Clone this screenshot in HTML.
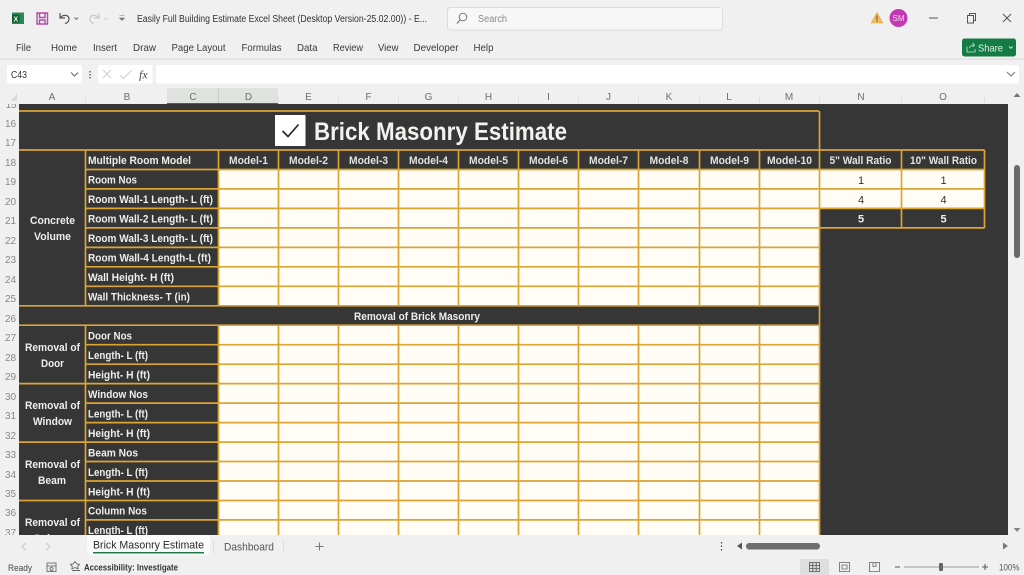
<!DOCTYPE html>
<html><head><meta charset="utf-8"><title>Brick Masonry Estimate</title>
<style>
html,body{margin:0;padding:0;width:1024px;height:575px;overflow:hidden;background:#f0f0f0}
svg{display:block}
text{font-family:"Liberation Sans",sans-serif}
.l{font-size:11px;font-weight:bold;fill:#eeeeec}
.m{font-size:11px;font-weight:bold;fill:#e2e2e0}
.c{font-size:10px;fill:#6e6e6e}
.r{font-size:10px;fill:#888}
</style></head><body>
<svg width="1024" height="575" viewBox="0 0 1024 575" xmlns="http://www.w3.org/2000/svg">
<defs><clipPath id="s"><rect x="0" y="104" width="1024" height="431"/></clipPath></defs>
<rect width="1024" height="575" fill="#f0f0f0"/>

<!-- title bar -->
<rect x="12" y="12.500" width="12" height="11.500" fill="#2a8a55"/><rect x="12" y="14.500" width="7.500" height="8" fill="#0f5c30"/>
<text x="13.500" y="21.500" style="font-size:7px;font-weight:bold;fill:#fff">X</text>
<path d="M37 13h10.500v11H37zM39.500 13v4.500h5.500V13M39.500 24v-4h5.500v4" fill="none" stroke="#b24aa6" stroke-width="1.400"/>
<path d="M60 13v5h5M60.500 17.500c3-3.500 8-2.500 8.500 1 .3 2.500-1.500 4.500-4 5" fill="none" stroke="#555" stroke-width="1.200"/>
<path d="M74.500 17.500l1.800 1.800 1.800-1.800" fill="none" stroke="#666"/>
<path d="M99 13v5h-5M98.500 17.500c-3-3.500-8-2.500-8.500 1-.3 2.500 1.500 4.500 4 5" fill="none" stroke="#c8c8c8" stroke-width="1.200"/>
<path d="M104 18l1.800 1.800 1.800-1.800" fill="none" stroke="#d0d0d0"/>
<path d="M119.500 15.500h5M119.500 18h5l-2.500 2.500z" fill="#777" stroke="#777" stroke-width=".6"/>
<text x="137" y="22" textLength="290" lengthAdjust="spacingAndGlyphs" style="font-size:10px;fill:#333">Easily Full Building Estimate Excel Sheet (Desktop Version-25.02.00))  -  E...</text>
<rect x="447.500" y="7.500" width="275" height="22.500" rx="3" fill="#f7f7f7" stroke="#dcdcdc"/>
<circle cx="463" cy="17" r="3.800" fill="none" stroke="#777"/><path d="M460 20l-3 3.500" stroke="#777" stroke-width="1.200"/>
<text x="478" y="22" textLength="29" lengthAdjust="spacingAndGlyphs" style="font-size:10px;fill:#888">Search</text>
<path d="M877 12.500l5.700 10.500h-11.400z" fill="#f2bd62" stroke="#dca040" stroke-width=".6"/><path d="M877 15.500v4.200M877 20.500v1.300" stroke="#6b4a10" stroke-width="1"/>
<circle cx="898.500" cy="18" r="9" fill="#c239b3"/>
<text x="898.500" y="21" text-anchor="middle" style="font-size:8px;fill:#f6d8f2">SM</text>
<path d="M929 18h9" stroke="#555" stroke-width="1"/>
<path d="M967.500 15.500h6v7.500h-6zM969.500 15.500v-2h6v7h-2" fill="none" stroke="#555" stroke-width="1"/>
<path d="M1003 14l8 8M1011 14l-8 8" stroke="#555" stroke-width="1"/>

<!-- menu -->
<g style="font-size:10.500px;fill:#3a3a3a">
<text x="16" y="51" textLength="15" lengthAdjust="spacingAndGlyphs">File</text>
<text x="51" y="51" textLength="26" lengthAdjust="spacingAndGlyphs">Home</text>
<text x="93" y="51" textLength="24" lengthAdjust="spacingAndGlyphs">Insert</text>
<text x="133" y="51" textLength="23" lengthAdjust="spacingAndGlyphs">Draw</text>
<text x="171.500" y="51" textLength="54" lengthAdjust="spacingAndGlyphs">Page Layout</text>
<text x="241.500" y="51" textLength="40" lengthAdjust="spacingAndGlyphs">Formulas</text>
<text x="297" y="51" textLength="20.500" lengthAdjust="spacingAndGlyphs">Data</text>
<text x="333" y="51" textLength="30" lengthAdjust="spacingAndGlyphs">Review</text>
<text x="378" y="51" textLength="20.500" lengthAdjust="spacingAndGlyphs">View</text>
<text x="413.500" y="51" textLength="45" lengthAdjust="spacingAndGlyphs">Developer</text>
<text x="473.500" y="51" textLength="20" lengthAdjust="spacingAndGlyphs">Help</text>
</g>
<rect x="962" y="38.500" width="54" height="18" rx="2.500" fill="#137b44"/>
<path d="M967 46.500v5.500h8v-3M969.500 48c.5-2 2-3 4.500-3M972.500 43l2 2-2 2" fill="none" stroke="#cfe6d7" stroke-width=".8"/>
<text x="978" y="51.500" textLength="25" lengthAdjust="spacingAndGlyphs" style="font-size:10.500px;fill:#e0f0e6">Share</text>
<path d="M1009 46.500l1.800 1.800 1.800-1.800" fill="none" stroke="#cfe6d7"/>
<rect x="0" y="58.500" width="1024" height="1.500" fill="#e2e2e2"/>

<!-- formula bar -->
<rect x="7" y="65" width="75" height="18.500" rx="2" fill="#fff"/>
<text x="11" y="78" textLength="16" lengthAdjust="spacingAndGlyphs" style="font-size:10px;fill:#333">C43</text>
<path d="M71 72.500l3.500 3.500 3.500-3.500" fill="none" stroke="#666"/>
<path d="M90 71v1.500M90 74v1.500M90 77v1.500" stroke="#444" stroke-width="1.200"/>
<rect x="98" y="65" width="54.500" height="18.500" rx="2" fill="#fff"/>
<path d="M103 70l8 8M111 70l-8 8" stroke="#cdcdcd"/>
<path d="M120 75l3.500 3.500 8-8" fill="none" stroke="#cdcdcd"/>
<text x="139" y="78.500" style="font-family:'Liberation Serif',serif;font-size:12px;font-style:italic;fill:#444">fx</text>
<rect x="156" y="65" width="863" height="18.500" rx="2" fill="#fff"/>
<path d="M1007 72l4 4 4-4" fill="none" stroke="#777"/>

<!-- column header -->
<rect x="167" y="88" width="111" height="16" fill="#dfe2df"/>
<rect x="167" y="103" width="111" height="1.500" fill="#1d7a45"/>
<path d="M218.500 89v14" stroke="#c8cac8"/>
<path d="M85.500 97v6M278.500 97v6M338.500 97v6M398.500 97v6M458.500 97v6M518.500 97v6M578.500 97v6M638.500 97v6M699.500 97v6M759.500 97v6M819.500 97v6M901.500 97v6M984.500 97v6" stroke="#e0e0e0"/>
<path d="M17 93v8h-6z" fill="#dadada"/>
<g text-anchor="middle">
<text class="c" x="52" y="100">A</text><text class="c" x="127" y="100">B</text><text class="c" x="193" y="100">C</text><text class="c" x="248.500" y="100">D</text><text class="c" x="308.500" y="100">E</text><text class="c" x="368.500" y="100">F</text><text class="c" x="428.500" y="100">G</text><text class="c" x="488.500" y="100">H</text><text class="c" x="548.500" y="100">I</text><text class="c" x="608.500" y="100">J</text><text class="c" x="669" y="100">K</text><text class="c" x="729" y="100">L</text><text class="c" x="789" y="100">M</text><text class="c" x="861" y="100">N</text><text class="c" x="943" y="100">O</text>
</g>

<!-- sheet -->
<g clip-path="url(#s)">
<g text-anchor="middle">
<text class="r" x="11" y="108">15</text>
<text class="r" x="10.500" y="127">16</text><text class="r" x="10.500" y="146">17</text><text class="r" x="10.500" y="166">18</text><text class="r" x="10.500" y="185">19</text><text class="r" x="10.500" y="205">20</text><text class="r" x="10.500" y="224">21</text><text class="r" x="10.500" y="244">22</text><text class="r" x="10.500" y="263">23</text><text class="r" x="10.500" y="283">24</text><text class="r" x="10.500" y="302">25</text><text class="r" x="10.500" y="322">26</text><text class="r" x="10.500" y="341">27</text><text class="r" x="10.500" y="361">28</text><text class="r" x="10.500" y="380">29</text><text class="r" x="10.500" y="400">30</text><text class="r" x="10.500" y="419">31</text><text class="r" x="10.500" y="439">32</text><text class="r" x="10.500" y="458">33</text><text class="r" x="10.500" y="478">34</text><text class="r" x="10.500" y="497">35</text><text class="r" x="10.500" y="516">36</text><text class="r" x="10.500" y="536">37</text>
</g>
<rect x="19" y="104" width="989" height="431" fill="#363636"/>
<!-- white cells -->
<rect x="218" y="169.500" width="601" height="136.300" fill="#fffdf6"/>
<rect x="218" y="325.200" width="601" height="210" fill="#fffdf6"/>
<rect x="819" y="169.500" width="165" height="38.900" fill="#fffdf6"/>
<!-- gold grid -->
<g fill="none" stroke="#dba433" stroke-width="1.700">
<path d="M19 111h800M19 150h965.500M19 305.800h800M19 325.200h800M19 383.600h199M19 442.100h199M19 500.500h199"/>
<path d="M85 169.500h734M85 188.900h734M85 208.400h734M85 227.900h734M85 247.400h734M85 266.800h734M85 286.300h734"/>
<path d="M85 344.700h734M85 364.200h734M218 383.600h601M85 403.100h734M85 422.600h734M218 442.100h601M85 461.500h734M85 481h734M218 500.500h601M85 519.900h734"/>
<path d="M819 169.500h165.500M819 188.900h165.500M819 208.400h165.500M819 227.900h165.500"/>
<path d="M85.500 150v155.800M85.500 325.200v210M218.500 150v155.800M218.500 325.200v210"/>
<path d="M278.500 150v155.800M278.500 325.200v210M338.500 150v155.800M338.500 325.200v210M398.500 150v155.800M398.500 325.200v210M458.500 150v155.800M458.500 325.200v210M518.500 150v155.800M518.500 325.200v210M578.500 150v155.800M578.500 325.200v210M638.500 150v155.800M638.500 325.200v210M699.500 150v155.800M699.500 325.200v210M759.500 150v155.800M759.500 325.200v210"/>
<path d="M819.500 111v424M901.500 150v78M984.500 150v78"/>
</g>
<!-- title -->
<rect x="275" y="115" width="30.500" height="31" fill="#fff"/>
<path d="M282.500 131l5.500 5.500 10.500-12" fill="none" stroke="#2a2a2a" stroke-width="1.700"/>
<text x="314" y="140" textLength="253" lengthAdjust="spacingAndGlyphs" style="font-size:25px;font-weight:bold;fill:#f2f2f0">Brick Masonry Estimate</text>

<!-- labels -->
<text class="l" x="88" y="164" textLength="103" lengthAdjust="spacingAndGlyphs">Multiple Room Model</text>
<text class="l" x="88" y="183.500" textLength="49" lengthAdjust="spacingAndGlyphs">Room Nos</text>
<text class="l" x="88" y="203" textLength="125" lengthAdjust="spacingAndGlyphs">Room Wall-1 Length- L (ft)</text>
<text class="l" x="88" y="222.500" textLength="125" lengthAdjust="spacingAndGlyphs">Room Wall-2 Length- L (ft)</text>
<text class="l" x="88" y="242" textLength="125" lengthAdjust="spacingAndGlyphs">Room Wall-3 Length- L (ft)</text>
<text class="l" x="88" y="261.500" textLength="123" lengthAdjust="spacingAndGlyphs">Room Wall-4 Length-L (ft)</text>
<text class="l" x="88" y="281" textLength="86" lengthAdjust="spacingAndGlyphs">Wall Height- H (ft)</text>
<text class="l" x="88" y="300.500" textLength="102" lengthAdjust="spacingAndGlyphs">Wall Thickness- T (in)</text>
<text class="l" x="88" y="339.500" textLength="44" lengthAdjust="spacingAndGlyphs">Door Nos</text>
<text class="l" x="88" y="359" textLength="60" lengthAdjust="spacingAndGlyphs">Length- L (ft)</text>
<text class="l" x="88" y="378.500" textLength="62" lengthAdjust="spacingAndGlyphs">Height- H (ft)</text>
<text class="l" x="88" y="398" textLength="60" lengthAdjust="spacingAndGlyphs">Window Nos</text>
<text class="l" x="88" y="417.500" textLength="60" lengthAdjust="spacingAndGlyphs">Length- L (ft)</text>
<text class="l" x="88" y="437" textLength="62" lengthAdjust="spacingAndGlyphs">Height- H (ft)</text>
<text class="l" x="88" y="456.500" textLength="50" lengthAdjust="spacingAndGlyphs">Beam Nos</text>
<text class="l" x="88" y="476" textLength="60" lengthAdjust="spacingAndGlyphs">Length- L (ft)</text>
<text class="l" x="88" y="495.500" textLength="62" lengthAdjust="spacingAndGlyphs">Height- H (ft)</text>
<text class="l" x="88" y="514.500" textLength="59" lengthAdjust="spacingAndGlyphs">Column Nos</text>
<text class="l" x="88" y="534" textLength="60" lengthAdjust="spacingAndGlyphs">Length- L (ft)</text>

<text class="l" x="30" y="224" textLength="45" lengthAdjust="spacingAndGlyphs">Concrete</text>
<text class="l" x="34" y="240" textLength="37" lengthAdjust="spacingAndGlyphs">Volume</text>
<text class="l" x="25" y="351" textLength="55" lengthAdjust="spacingAndGlyphs">Removal of</text>
<text class="l" x="41" y="367" textLength="23" lengthAdjust="spacingAndGlyphs">Door</text>
<text class="l" x="25" y="409" textLength="55" lengthAdjust="spacingAndGlyphs">Removal of</text>
<text class="l" x="33" y="425" textLength="39" lengthAdjust="spacingAndGlyphs">Window</text>
<text class="l" x="25" y="468" textLength="55" lengthAdjust="spacingAndGlyphs">Removal of</text>
<text class="l" x="38" y="484" textLength="28" lengthAdjust="spacingAndGlyphs">Beam</text>
<text class="l" x="25" y="526" textLength="55" lengthAdjust="spacingAndGlyphs">Removal of</text>
<text class="l" x="33" y="542" textLength="39" lengthAdjust="spacingAndGlyphs">Column</text>
<text class="l" x="354" y="320" textLength="126" lengthAdjust="spacingAndGlyphs">Removal of Brick Masonry</text>

<text class="m" x="229" y="164" textLength="39" lengthAdjust="spacingAndGlyphs">Model-1</text>
<text class="m" x="289" y="164" textLength="39" lengthAdjust="spacingAndGlyphs">Model-2</text>
<text class="m" x="349" y="164" textLength="39" lengthAdjust="spacingAndGlyphs">Model-3</text>
<text class="m" x="409" y="164" textLength="39" lengthAdjust="spacingAndGlyphs">Model-4</text>
<text class="m" x="469" y="164" textLength="39" lengthAdjust="spacingAndGlyphs">Model-5</text>
<text class="m" x="529" y="164" textLength="39" lengthAdjust="spacingAndGlyphs">Model-6</text>
<text class="m" x="589" y="164" textLength="39" lengthAdjust="spacingAndGlyphs">Model-7</text>
<text class="m" x="649.500" y="164" textLength="39" lengthAdjust="spacingAndGlyphs">Model-8</text>
<text class="m" x="710" y="164" textLength="39" lengthAdjust="spacingAndGlyphs">Model-9</text>
<text class="m" x="767" y="164" textLength="45" lengthAdjust="spacingAndGlyphs">Model-10</text>
<text class="m" x="829.500" y="164" textLength="62" lengthAdjust="spacingAndGlyphs">5" Wall Ratio</text>
<text class="m" x="910" y="164" textLength="67" lengthAdjust="spacingAndGlyphs">10" Wall Ratio</text>
<g text-anchor="middle" style="font-size:11px;fill:#333">
<text x="861" y="184">1</text><text x="943.500" y="184">1</text>
<text x="861" y="203.500">4</text><text x="943.500" y="203.500">4</text>
</g>
<g text-anchor="middle" style="font-size:11px;font-weight:bold;fill:#f0f0ee">
<text x="861" y="222.500">5</text><text x="943.500" y="222.500">5</text>
</g>
</g>

<!-- vertical scrollbar -->
<path d="M1017 93l3.500 4h-7z" fill="#777"/>
<rect x="1014" y="165" width="6" height="93" rx="3" fill="#6a6a6a"/>
<path d="M1017 532l3.500-4h-7z" fill="#888"/>

<!-- tab bar -->
<path d="M26 543l-4 3.500 4 3.500M46 543l4 3.500-4 3.500" fill="none" stroke="#c8c8c8" stroke-width="1.100"/>
<path d="M87 535h123v16a4 4 0 0 1-4 4H91a4 4 0 0 1-4-4z" fill="#fbfbfb"/>
<text x="93" y="548.500" textLength="111" lengthAdjust="spacingAndGlyphs" style="font-size:11px;font-weight:500;fill:#2a2a2a">Brick Masonry Estimate</text>
<rect x="93" y="552" width="111" height="1.500" fill="#1d7a45"/>
<path d="M213.500 540v11M283.500 540v11" stroke="#dcdcdc"/>
<text x="224" y="550.500" textLength="50" lengthAdjust="spacingAndGlyphs" style="font-size:11px;fill:#555">Dashboard</text>
<path d="M315.500 546.500h8M319.500 542.500v8" stroke="#777"/>
<path d="M721.500 542v1.500M721.500 545.500v1.500M721.500 549v1.500" stroke="#444" stroke-width="1.200"/>
<path d="M737 546l5-3.500v7z" fill="#555"/>
<rect x="746" y="543" width="74" height="6.500" rx="3.200" fill="#6e6e6e"/>
<path d="M1008 546l-5-3.500v7z" fill="#777"/>

<!-- status bar -->
<text x="8" y="571" textLength="24" lengthAdjust="spacingAndGlyphs" style="font-size:9.500px;fill:#444">Ready</text>
<rect x="47" y="563" width="9" height="8.500" fill="none" stroke="#777"/><path d="M47 566h9" stroke="#777"/><circle cx="51.500" cy="569" r="1.500" fill="none" stroke="#777"/>
<path d="M75 561.500l2 2.500 2.500.3-1.800 2 .5 2.500-3.200-1.200-3.200 1.200.5-2.500-1.800-2 2.500-.3zM72 570.500h8" fill="none" stroke="#666" stroke-width=".9"/>
<text x="84" y="570.500" textLength="94" lengthAdjust="spacingAndGlyphs" style="font-size:9.500px;font-weight:bold;fill:#333">Accessibility: Investigate</text>
<rect x="800" y="559" width="29" height="16" fill="#dedede"/>
<path d="M809.500 562.500h10v9h-10zM809.500 565.500h10M809.500 568.500h10M812.800 562.500v9M816.200 562.500v9" fill="none" stroke="#555" stroke-width=".8"/>
<path d="M839.500 562.500h10v9h-10zM842 565h5v4h-5z" fill="none" stroke="#666" stroke-width=".8"/>
<path d="M869.500 562.500h10v9h-10zM873 562.500v4h3v-4" fill="none" stroke="#666" stroke-width=".8"/>
<path d="M895 567h5" stroke="#555"/>
<path d="M904 567h75" stroke="#999"/>
<rect x="939" y="563" width="4" height="8" rx="1" fill="#666"/>
<path d="M982 567h6M985 564v6" stroke="#555"/>
<text x="999" y="570.500" textLength="20.500" lengthAdjust="spacingAndGlyphs" style="font-size:9.500px;fill:#555">100%</text>
</svg>
</body></html>
